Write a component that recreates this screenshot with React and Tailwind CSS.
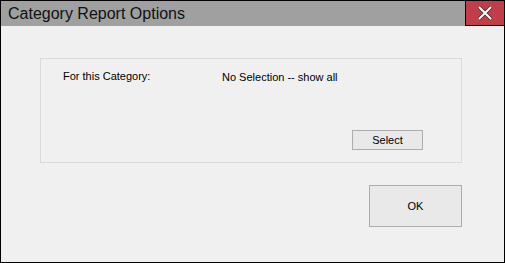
import React from 'react';

const App = () => {
    return (
        <div className="w-[505px] h-[263px] bg-[#f0f0f0] border border-black flex flex-col font-['Liberation_Sans',Arial,sans-serif] text-black overflow-hidden">
            {/* Title bar */}
            <div className="h-[25px] bg-[#a0a0a0] flex items-center justify-between shrink-0">
                <span className="pl-[7px] text-[16px] leading-none text-[#111]">Category Report Options</span>
                <button className="w-[39px] h-[25px] bg-[#c13d47] border-l border-b border-black flex items-center justify-center">
                    <svg width="16" height="14" viewBox="0 0 16 14">
                        <path d="M2 1 L14 13 M14 1 L2 13" stroke="#333" strokeWidth="3.6" />
                        <path d="M2 1 L14 13 M14 1 L2 13" stroke="#fff" strokeWidth="2" />
                    </svg>
                </button>
            </div>

            {/* Body */}
            <div className="flex-1 flex flex-col pl-[39px] pt-[32px] w-[461px]">
                <div className="h-[105px] border border-[#dadada] flex flex-col">
                    <div className="flex pt-[10px] text-[11px] leading-[14px]">
                        <span className="pl-[22px] w-[181px]">For this Category:</span>
                        <span className="pt-[1px]">No Selection -- show all</span>
                    </div>
                    <div className="flex justify-end pr-[38px] mt-[46px]">
                        <button className="w-[71px] h-[20px] bg-[#e9e9e9] border border-[#adadad] text-[11px] leading-none">Select</button>
                    </div>
                </div>
                <div className="flex justify-end mt-[22px]">
                    <button className="w-[93px] h-[42px] bg-[#e9e9e9] border border-[#adadad] text-[11px] leading-none">OK</button>
                </div>
            </div>
        </div>
    );
};

export default App;
